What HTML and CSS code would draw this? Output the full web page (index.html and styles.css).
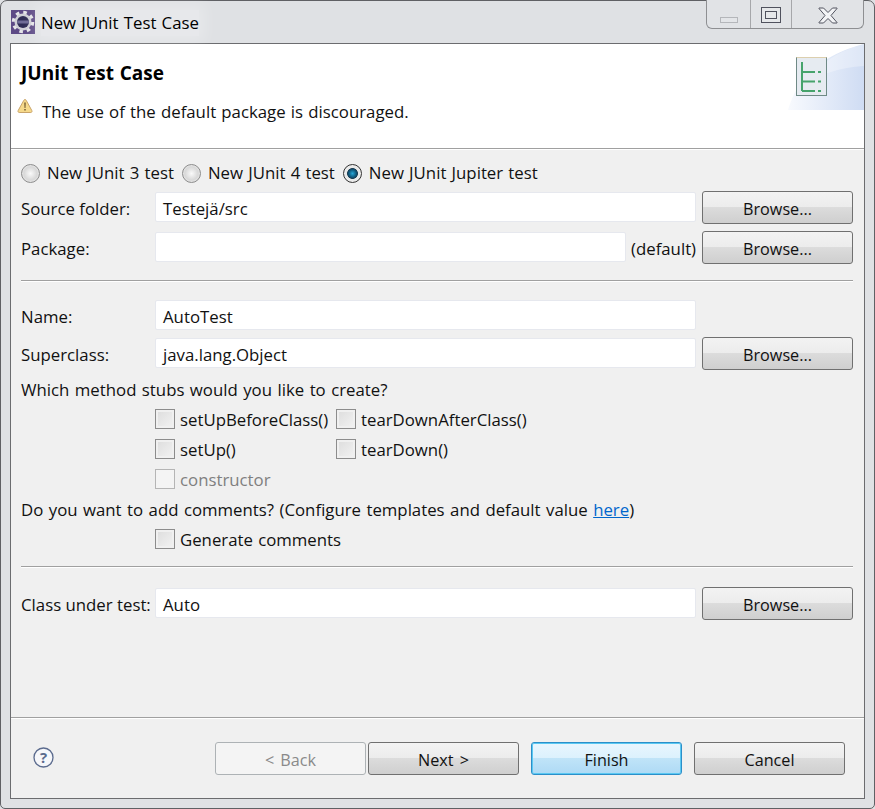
FILE: index.html
```html
<!DOCTYPE html>
<html lang="en">
<head>
    <meta charset="UTF-8">
    <title>New JUnit Test Case</title>
    <link rel="stylesheet" href="styles.css">
</head>
<body>
<div class="window">
    <div class="titlebar">
        <svg class="app-icon" width="24" height="24" viewBox="0 0 24 24">
            <rect width="24" height="24" fill="#5d4a86"/>
            <circle cx="12" cy="12" r="9.500" fill="none" stroke="#e4e4e8" stroke-width="3.500" stroke-dasharray="3.500 3.960"/>
            <circle cx="12" cy="12" r="8.500" fill="#cfcfd6"/>
            <circle cx="12" cy="12" r="6" fill="#2f2c55"/>
            <path d="M6.300 10.500h11.400a6 6 0 0 1 0 3h-11.400a6 6 0 0 1 0-3z" fill="#6f6b96"/>
        </svg>
        <span class="title">New JUnit Test Case</span>
        <div class="winbtns">
            <div class="winbtn min"><span class="min-bar"></span></div>
            <div class="winbtn max"><span class="max-box"></span></div>
            <div class="winbtn close">
                <svg width="20" height="17" viewBox="0 0 20 17">
                    <path d="M1 1h4.500l4.500 4.500 4.500-4.500h4.500v.5l-6 7 6 7v.5h-4.500l-4.500-4.500-4.500 4.500h-4.500v-.5l6-7-6-7z" fill="#f2f3f5" stroke="#50525e" stroke-width="1"/>
                </svg>
            </div>
        </div>
    </div>

    <div class="dialog">
        <div class="banner">
            <svg class="banner-art" width="76" height="66" viewBox="0 0 76 66">
                <defs>
                    <linearGradient id="swoosh" x1="0" y1="0" x2="1" y2="0">
                        <stop offset="0" stop-color="#f8fafe"/>
                        <stop offset="1" stop-color="#cfdcf3"/>
                    </linearGradient>
                </defs>
                <path d="M0 66q14-50 76-66v66z" fill="url(#swoosh)"/>
                <path d="M14 44q24-20 62-22v-22q-40 10-62 44z" fill="#fff" opacity=".3"/>
            </svg>
            <h1>JUnit Test Case</h1>
            <div class="message">
                <svg width="16" height="16" viewBox="0 0 16 16">
                    <path d="M8 1.500c.6 0 1 .4 1.300 1l5.500 10c.5 1 0 2-1 2h-11.600c-1 0-1.500-1-1-2l5.500-10c.3-.6.700-1 1.300-1z" fill="#f6d98a" stroke="#c9a46a"/>
                    <path d="M7.200 4.500h1.600l-.3 5.500h-1z M7.200 11h1.600v1.600h-1.600z" fill="#7a6236"/>
                </svg>
                <span>The use of the default package is discouraged.</span>
            </div>
            <svg class="banner-icon" width="31" height="39" viewBox="0 0 31 39">
                <rect x=".5" y=".5" width="30" height="38" fill="#e6ebf1" stroke="#6f8a86"/>
                <path d="M.5 .5h30" stroke="#dccfae"/>
                <path d="M6 5v29M6 15h13M6 24.500h13M6 34h13M22 15h3M22 24.500h3M22 34h3" fill="none" stroke="#46a36c" stroke-width="2"/>
            </svg>
        </div>

        <div class="form">
            <div class="radios">
                <label class="radio"><span class="radio-dot"></span>New JUnit 3 test</label>
                <label class="radio"><span class="radio-dot"></span>New JUnit 4 test</label>
                <label class="radio"><span class="radio-dot on"></span>New JUnit Jupiter test</label>
            </div>

            <div class="row">
                <span class="label">Source folder:</span>
                <div class="input">Testejä/src</div>
                <button class="btn">Browse...</button>
            </div>
            <div class="row row-gap7">
                <span class="label">Package:</span>
                <div class="input short"></div>
                <span class="suffix">(default)</span>
                <button class="btn">Browse...</button>
            </div>

            <div class="sep sep-first"></div>

            <div class="row row-name">
                <span class="label">Name:</span>
                <div class="input">AutoTest</div>
                <span class="btn-space"></span>
            </div>
            <div class="row row-gap5">
                <span class="label">Superclass:</span>
                <div class="input">java.lang.Object</div>
                <button class="btn">Browse...</button>
            </div>

            <p class="text text-stubs">Which method stubs would you like to create?</p>
            <div class="checks">
                <label class="check"><span class="box"></span>setUpBeforeClass()</label>
                <label class="check"><span class="box"></span>tearDownAfterClass()</label>
                <label class="check"><span class="box"></span>setUp()</label>
                <label class="check"><span class="box"></span>tearDown()</label>
                <label class="check disabled"><span class="box"></span>constructor</label>
            </div>
            <p class="text">Do you want to add comments? (Configure templates and default value <a href="#">here</a>)</p>
            <div class="checks checks-comments">
                <label class="check"><span class="box"></span>Generate comments</label>
            </div>

            <div class="sep sep-second"></div>

            <div class="row row-class">
                <span class="label">Class under test:</span>
                <div class="input">Auto</div>
                <button class="btn">Browse...</button>
            </div>
        </div>

        <div class="footer">
            <svg class="help" width="21" height="21" viewBox="0 0 21 21">
                <circle cx="10.500" cy="10.500" r="9.500" fill="#f6f7fa" stroke="#5b6b8e" stroke-width="1.300"/>
                <text x="10.500" y="16" text-anchor="middle" class="help-mark">?</text>
            </svg>
            <div class="footer-btns">
                <button class="btn disabled">&lt; Back</button>
                <button class="btn next">Next &gt;</button>
                <button class="btn primary">Finish</button>
                <button class="btn">Cancel</button>
            </div>
        </div>
    </div>
</div>
</body>
</html>
```

FILE: styles.css
```css
* {
    box-sizing: border-box;
    margin: 0;
    padding: 0;
}
html, body {
    height: 100%;
}
body {
    background: #dfe1e4;
    font-family: "Open Sans", "Liberation Sans", sans-serif;
    font-size: 16.8px;
    word-spacing: 0.85px;
    color: #111;
    overflow: hidden;
}
.window {
    height: 809px;
    border: 1px solid #5f6064;
    border-radius: 7px 7px 5px 5px;
    background: #dfe1e4;
    display: flex;
    flex-direction: column;
}

/* title bar */
.titlebar {
    height: 42px;
    flex: none;
    display: flex;
    align-items: flex-start;
    padding-left: 10px;
    position: relative;
}
.app-icon {
    margin-top: 9px;
}
.title {
    margin: 9px 0 0 6px;
    line-height: 26px;
    color: #000;
    background: rgba(255, 255, 255, 0.25);
    box-shadow: 0 0 14px 6px rgba(255, 255, 255, 0.25);
}
.winbtns {
    margin-left: auto;
    margin-right: 10px;
    height: 29px;
    margin-top: -1px;
    display: flex;
    border: 1px solid #8e8f92;
    border-top: 0;
    border-radius: 0 0 6px 6px;
    background: #e1e3e6;
}
.winbtn {
    display: flex;
    justify-content: center;
    border-left: 1px solid #a6a7aa;
}
.winbtn:first-child {
    border-left: 0;
}
.min {
    width: 43px;
}
.max {
    width: 41px;
}
.close {
    width: 72px;
    padding-top: 7px;
}
.min-bar {
    width: 18px;
    height: 6px;
    margin-top: 17px;
    background: #e3e5e8;
    border: 1px solid #b4b6ba;
}
.max-box {
    width: 20px;
    height: 16px;
    margin-top: 7px;
    border: 1px solid #50525e;
    background: #e6e8ea;
    box-shadow: inset 0 0 0 3px #e6e8ea, inset 0 0 0 4px #50525e;
}

/* dialog body */
.dialog {
    flex: 1;
    margin: 0 9px 9px 9px;
    border: 1px solid #6b6c6f;
    background: #f0f0f0;
    display: flex;
    flex-direction: column;
}
.banner {
    height: 105px;
    flex: none;
    background: #fff;
    border-bottom: 1px solid #a0a0a0;
    padding: 15px 0 0 10px;
    position: relative;
}
.banner h1 {
    font-size: 19px;
    line-height: 28px;
    font-weight: 700;
    color: #000;
}
.banner-art {
    position: absolute;
    right: 0;
    top: 0;
}
.message {
    display: flex;
    align-items: flex-start;
    margin-top: 13px;
    margin-left: -4px;
    line-height: 24px;
}
.message svg {
    margin-top: -2px;
    flex: none;
}
.message span {
    margin-left: 9px;
}
.banner-icon {
    position: absolute;
    right: 37px;
    top: 13px;
}

/* form rows */
.form {
    flex: 1;
    border-top: 1px solid #fff;
    padding: 0 11px 0 10px;
}
.radios {
    display: flex;
    height: 24px;
    margin-top: 11px;
    margin-bottom: 6px;
    align-items: center;
}
.radio {
    display: flex;
    align-items: center;
    margin-right: 8px;
    line-height: 24px;
    white-space: nowrap;
}
.radio-dot {
    width: 19px;
    height: 19px;
    border-radius: 50%;
    border: 1px solid #8c8c8c;
    background: radial-gradient(circle, #fafafa 0, #d8d8d8 55%, #eee 80%);
    margin-right: 7px;
    flex: none;
}
.radio-dot.on {
    background: radial-gradient(circle, #28a8d8 0, #0f5578 32%, #1b3f55 42%, #e8e8e8 48%, #f4f4f4 100%);
    border-color: #333;
}
.row {
    display: flex;
    height: 33px;
    align-items: center;
}
.row-gap7 {
    margin-top: 7px;
}
.row-gap5 {
    margin-top: 5px;
}
.row-name {
    margin-top: 17px;
}
.row-class {
    margin-top: 19px;
}
.label {
    width: 134px;
    flex: none;
    padding-top: 1px;
    word-spacing: 0;
    white-space: nowrap;
}
.input {
    flex: 1;
    height: 30px;
    align-self: flex-start;
    margin-top: 1px;
    background: #fff;
    border: 1px solid #e6e8ee;
    border-radius: 2px;
    padding-left: 7px;
    line-height: 31px;
    color: #111;
}
.input.short {
    flex: none;
    width: 471px;
}
.suffix {
    flex: none;
    width: 70px;
    padding: 1px 0 0 5px;
    white-space: nowrap;
}
.btn-space {
    width: 157px;
    flex: none;
}
.btn {
    width: 151px;
    height: 33px;
    flex: none;
    padding-top: 3px;
    font-family: inherit;
    font-size: 16.2px;
    word-spacing: 2px;
    color: #111;
    border: 1px solid #707070;
    border-radius: 3px;
    background: linear-gradient(#f3f3f3 0, #ececec 48%, #dcdcdc 49%, #cfcfcf 100%);
}
.row .btn {
    margin-left: 6px;
}
.btn.disabled {
    color: #8a8a8a;
    border-color: #adb2b5;
    background: #f4f4f4;
}
.btn.primary {
    border: 1px solid #2c8fc9;
    background: linear-gradient(#e9f6fe 0, #dcf1fd 48%, #c0e4f8 49%, #aedaf5 100%);
    box-shadow: inset 0 0 0 1px #5ac8f2;
}
.text {
    line-height: 24px;
    margin-top: 7px;
    word-spacing: 1.1px;
}
.text-stubs {
    margin-top: 8px;
}
.text a {
    color: #0066cc;
}
.checks {
    display: grid;
    grid-template-columns: 181px auto;
    justify-content: start;
    margin-left: 134px;
    margin-top: 6px;
    row-gap: 6px;
}
.text-stubs + .checks {
    margin-top: 5px;
}
.checks-comments {
    margin-top: 5px;
}
.check {
    display: flex;
    align-items: center;
    height: 24px;
    white-space: nowrap;
}
.box {
    width: 20px;
    height: 20px;
    flex: none;
    margin-right: 5px;
    border: 1px solid #8c8c8c;
    background: linear-gradient(135deg, #dcdcdc, #f3f3f3);
    box-shadow: inset 0 0 0 2px #f0f0f0;
}
.check.disabled {
    color: #7f7f7f;
}
.check.disabled .box {
    border-color: #b5b5b5;
    background: #f4f4f4;
    box-shadow: none;
}
.sep {
    height: 2px;
    border-top: 1px solid #a0a0a0;
    border-bottom: 1px solid #fff;
}
.sep-first {
    margin-top: 16px;
}
.sep-second {
    margin-top: 15px;
}

/* footer */
.footer {
    flex: none;
    height: 81px;
    border-top: 1px solid #a0a0a0;
    box-shadow: inset 0 1px 0 #fff;
    display: flex;
    align-items: flex-start;
    padding: 24px 19px 0 22px;
}
.help {
    margin-top: 5px;
}
.help-mark {
    font-size: 15px;
    font-weight: 700;
    fill: #5b6b8e;
}
.footer-btns {
    margin-left: auto;
    display: flex;
}
.btn.next {
    margin: 0 12px 0 2px;
}
.btn.primary {
    margin-right: 12px;
}
```
